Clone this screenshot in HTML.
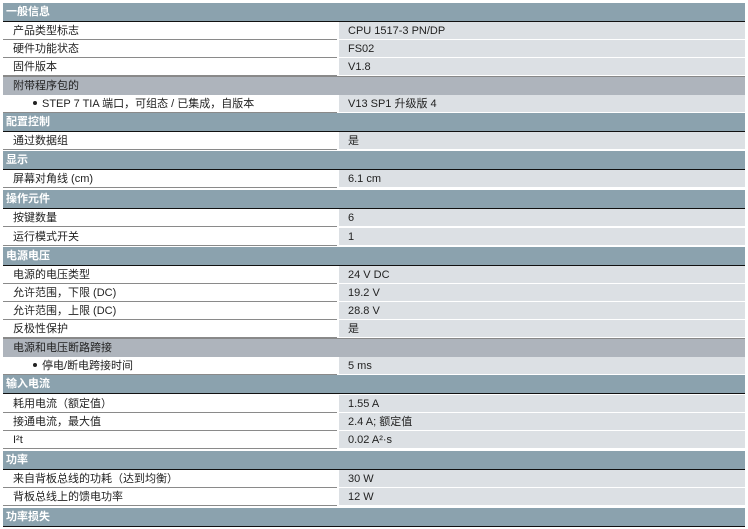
<!DOCTYPE html>
<html><head><meta charset="utf-8"><style>
body{margin:0;width:748px;height:529px;background:#fff;position:relative;overflow:hidden;font-family:"Liberation Sans","Noto Sans CJK SC",sans-serif;font-size:11px;color:#222}
.h{position:absolute;left:3px;width:739px;height:18px;background:#8ba2ae;border-bottom:1px solid #111;color:#fff;font-weight:bold;line-height:18px;padding-left:3px;box-sizing:content-box}
.s{position:absolute;left:3px;width:742px;height:18px;background:#aeb4bc;line-height:18px;border-top:1px solid #888}
.s span{padding-left:10px}
.r{position:absolute;left:3px;width:742px;height:18px;line-height:18px}
.r .l{position:absolute;left:0;top:0;width:334px;border-bottom:1px solid #8a8a8a;padding-left:10px;box-sizing:border-box;height:18px}
.r .v{position:absolute;left:336px;top:0;width:406px;background:#dce0e4;padding-left:9px;box-sizing:border-box;border-bottom:1px solid #fff;height:18px}
.b{padding-left:30px!important}
.b:before{content:"";display:inline-block;width:4px;height:4px;border-radius:50%;background:#222;margin-right:5px;vertical-align:2px}
</style></head><body>
<div class="h" style="top:3px">一般信息</div>
<div class="r" style="top:22px"><div class="l">产品类型标志</div><div class="v">CPU 1517-3 PN/DP</div></div>
<div class="r" style="top:40px"><div class="l">硬件功能状态</div><div class="v">FS02</div></div>
<div class="r" style="top:58px"><div class="l">固件版本</div><div class="v">V1.8</div></div>
<div class="s" style="top:76px"><span>附带程序包的</span></div>
<div class="r" style="top:95px"><div class="l b">STEP 7 TIA 端口，可组态 / 已集成，自版本</div><div class="v">V13 SP1 升级版 4</div></div>
<div class="h" style="top:113px">配置控制</div>
<div class="r" style="top:132px"><div class="l">通过数据组</div><div class="v">是</div></div>
<div class="h" style="top:151px">显示</div>
<div class="r" style="top:170px"><div class="l">屏幕对角线 (cm)</div><div class="v">6.1 cm</div></div>
<div class="h" style="top:190px">操作元件</div>
<div class="r" style="top:209px"><div class="l">按键数量</div><div class="v">6</div></div>
<div class="r" style="top:228px"><div class="l">运行模式开关</div><div class="v">1</div></div>
<div class="h" style="top:247px">电源电压</div>
<div class="r" style="top:266px"><div class="l">电源的电压类型</div><div class="v">24 V DC</div></div>
<div class="r" style="top:284px"><div class="l">允许范围，下限 (DC)</div><div class="v">19.2 V</div></div>
<div class="r" style="top:302px"><div class="l">允许范围，上限 (DC)</div><div class="v">28.8 V</div></div>
<div class="r" style="top:320px"><div class="l">反极性保护</div><div class="v">是</div></div>
<div class="s" style="top:338px"><span>电源和电压断路跨接</span></div>
<div class="r" style="top:357px"><div class="l b">停电/断电跨接时间</div><div class="v">5 ms</div></div>
<div class="h" style="top:375px">输入电流</div>
<div class="r" style="top:395px"><div class="l">耗用电流（额定值）</div><div class="v">1.55 A</div></div>
<div class="r" style="top:413px"><div class="l">接通电流，最大值</div><div class="v">2.4 A; 额定值</div></div>
<div class="r" style="top:431px"><div class="l">I²t</div><div class="v">0.02 A²·s</div></div>
<div class="h" style="top:451px">功率</div>
<div class="r" style="top:470px"><div class="l">来自背板总线的功耗（达到均衡）</div><div class="v">30 W</div></div>
<div class="r" style="top:488px"><div class="l">背板总线上的馈电功率</div><div class="v">12 W</div></div>
<div class="h" style="top:508px">功率损失</div>
</body></html>
